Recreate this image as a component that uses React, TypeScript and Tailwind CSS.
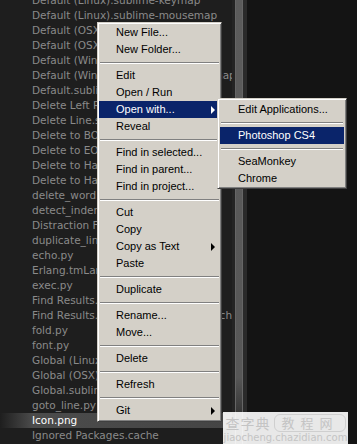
import React from 'react';

const FILES = [
  'Default (Linux).sublime-keymap',
  'Default (Linux).sublime-mousemap',
  'Default (OSX).sublime-keymap',
  'Default (OSX).sublime-mousemap',
  'Default (Windows).sublime-keymap',
  'Default (Windows).sublime-mousemap',
  'Default.sublime-commands',
  'Delete Left Right.sublime-macro',
  'Delete Line.sublime-macro',
  'Delete to BOL.sublime-macro',
  'Delete to EOL.sublime-macro',
  'Delete to Hard BOL.sublime-macro',
  'Delete to Hard EOL.sublime-macro',
  'delete_word.py',
  'detect_indentation.py',
  'Distraction Free.sublime-settings',
  'duplicate_line.py',
  'echo.py',
  'Erlang.tmLanguage.cache',
  'exec.py',
  'Find Results.hidden-tmLanguage',
  'Find Results.hidden-tmLanguage.cache',
  'fold.py',
  'font.py',
  'Global (Linux).sublime-settings',
  'Global (OSX).sublime-settings',
  'Global.sublime-settings',
  'goto_line.py',
  'Icon.png',
  'Ignored Packages.cache',
];

type Entry = { label?: string; sep?: boolean; arrow?: boolean; active?: boolean };

const MENU: Entry[] = [
  { label: 'New File...' },
  { label: 'New Folder...' },
  { sep: true },
  { label: 'Edit' },
  { label: 'Open / Run' },
  { label: 'Open with...', arrow: true, active: true },
  { label: 'Reveal' },
  { sep: true },
  { label: 'Find in selected...' },
  { label: 'Find in parent...' },
  { label: 'Find in project...' },
  { sep: true },
  { label: 'Cut' },
  { label: 'Copy' },
  { label: 'Copy as Text', arrow: true },
  { label: 'Paste' },
  { sep: true },
  { label: 'Duplicate' },
  { sep: true },
  { label: 'Rename...' },
  { label: 'Move...' },
  { sep: true },
  { label: 'Delete' },
  { sep: true },
  { label: 'Refresh' },
  { sep: true },
  { label: 'Git', arrow: true },
];

const SUBMENU: Entry[] = [
  { label: 'Edit Applications...' },
  { sep: true },
  { label: 'Photoshop CS4', active: true },
  { sep: true },
  { label: 'SeaMonkey' },
  { label: 'Chrome' },
];

function MenuList({ items, pad }: { items: Entry[]; pad: string }) {
  return (
    <>
      {items.map((it, i) =>
        it.sep ? (
          <div key={i} className="h-[9px] flex flex-col justify-center px-[1px]">
            <div className="h-px bg-[#808080]" />
            <div className="h-px bg-white" />
          </div>
        ) : (
          <div
            key={i}
            className={`relative h-[17px] leading-[17px] ${pad} ${it.active ? 'bg-[#0a246a] text-white' : 'text-black'}`}
          >
            {it.label}
            {it.arrow && (
              <span
                className={`absolute right-[5px] top-[5px] w-0 h-0 border-y-[4px] border-y-transparent border-l-[4px] ${it.active ? 'border-l-white' : 'border-l-black'}`}
              />
            )}
          </div>
        )
      )}
    </>
  );
}

const menuFrame =
  'absolute bg-[#d4d0c8] border border-t-[#d4d0c8] border-l-[#d4d0c8] border-r-[#404040] border-b-[#404040] shadow-[inset_1px_1px_0_#ffffff,inset_-1px_-1px_0_#808080] text-[11px] font-["Liberation_Sans",Arial,sans-serif]';

export default function App() {
  return (
    <div className="relative w-[357px] h-[444px] overflow-hidden bg-[#141414] flex">
      {/* Sidebar */}
      <div className="w-[232px] h-full bg-[#1e1e1e] overflow-hidden shrink-0">
        <div className="-mt-[7px] font-['DejaVu_Sans',Verdana,sans-serif] text-[10.5px] text-[#8a8a8a]">
          {FILES.map(f => (
            <div
              key={f}
              className={`h-[15px] leading-[15px] pl-[32px] whitespace-nowrap ${
                f === 'Icon.png'
                  ? 'text-white bg-[linear-gradient(90deg,#1e1e1e_0%,#4b4b4b_14%,#454545_100%)]'
                  : ''
              }`}
            >
              {f}
            </div>
          ))}
        </div>
      </div>

      {/* Scrollbar */}
      <div className="w-[3px] h-full bg-[#242424] shrink-0" />
      <div className="w-[8px] h-full shrink-0 bg-[linear-gradient(180deg,#5c5c5c_0%,#575757_85%,#2a2a2a_96%)] border-x border-[#666]" />
      <div className="w-[4px] h-full bg-[#2a2a2a] shrink-0" />
      <div className="flex-1 h-full bg-[#141414]" />

      {/* Context menu */}
      <div className={`${menuFrame} left-[97px] top-[22px] w-[125px] pt-[1px] pb-[2px] px-[1px]`}>
        <MenuList items={MENU} pad="pl-[17px]" />
      </div>

      {/* Submenu */}
      <div className={`${menuFrame} left-[217px] top-[98px] w-[130px] pt-[2px] pb-[1px] px-[2px]`}>
        <MenuList items={SUBMENU} pad="pl-[18px]" />
      </div>

      {/* Watermark */}
      <div className="absolute left-[223px] top-[412px] w-[125px] h-[32px] bg-white/90 flex flex-col items-center pt-[2px] text-[#c4c4c4] font-['Noto_Sans_CJK_SC',sans-serif]">
        <div className="flex items-center gap-[4px] leading-[16px]">
          <span className="text-[14px] tracking-[1px]">查字典</span>
          <span className="text-[13px] border border-[#cfcfcf] rounded-[6px] px-[6px] tracking-[6px]">教程网</span>
        </div>
        <div className="text-[10px] leading-[12px] font-['DejaVu_Sans',sans-serif]">jiaocheng.chazidian.com</div>
      </div>
    </div>
  );
}
